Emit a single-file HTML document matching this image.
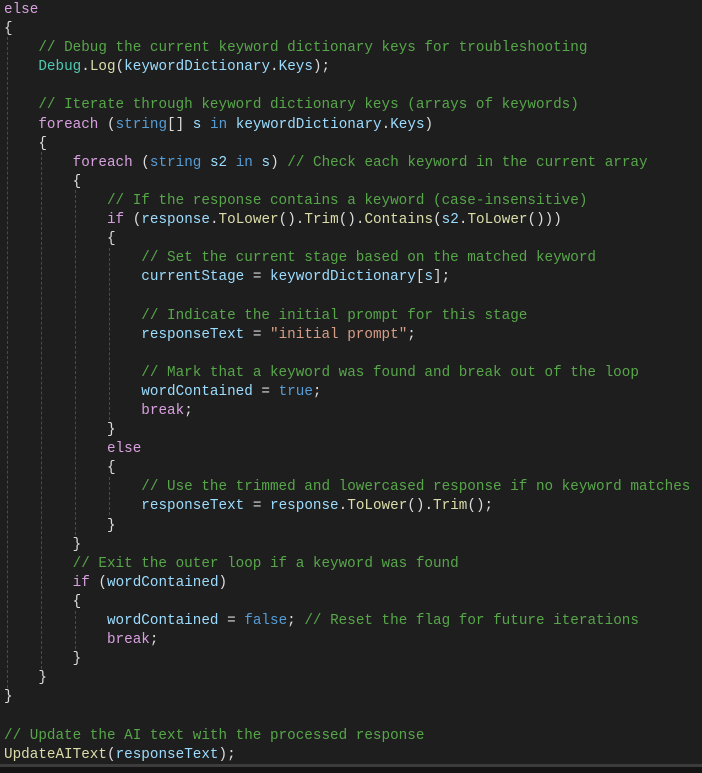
<!DOCTYPE html>
<html><head><meta charset="utf-8"><style>
html,body{margin:0;padding:0;background:#1e1e1e;width:702px;height:773px;overflow:hidden}
#code{position:absolute;left:4px;top:1px;font-family:"Liberation Mono",monospace;font-size:14.3px;line-height:19.1px;color:#dcdcdc;white-space:pre;margin:0}
.k{color:#d8a0df}.b{color:#569cd6}.c{color:#57a64a}.v{color:#9cdcfe}.m{color:#dcdcaa}.t{color:#4ec9b0}.s{color:#d69d85}
.g{position:absolute;width:0;border-left:1px dashed #4a4a4a}
#bar{position:absolute;left:0;top:764px;width:702px;height:3px;background:#3c3c3c}
#bot{position:absolute;left:0;top:767px;width:702px;height:6px;background:#141414}
</style></head><body>
<div class="g" style="left:7px;top:37px;height:651px"></div>
<div class="g" style="left:41px;top:152px;height:517px"></div>
<div class="g" style="left:75px;top:190px;height:345px"></div>
<div class="g" style="left:75px;top:611px;height:38px"></div>
<div class="g" style="left:109px;top:248px;height:172px"></div>
<div class="g" style="left:109px;top:477px;height:38px"></div>
<pre id="code"><span class="k">else</span>
{
    <span class="c">// Debug the current keyword dictionary keys for troubleshooting</span>
    <span class="t">Debug</span>.<span class="m">Log</span>(<span class="v">keywordDictionary</span>.<span class="v">Keys</span>);

    <span class="c">// Iterate through keyword dictionary keys (arrays of keywords)</span>
    <span class="k">foreach</span> (<span class="b">string</span>[] <span class="v">s</span> <span class="b">in</span> <span class="v">keywordDictionary</span>.<span class="v">Keys</span>)
    {
        <span class="k">foreach</span> (<span class="b">string</span> <span class="v">s2</span> <span class="b">in</span> <span class="v">s</span>) <span class="c">// Check each keyword in the current array</span>
        {
            <span class="c">// If the response contains a keyword (case-insensitive)</span>
            <span class="k">if</span> (<span class="v">response</span>.<span class="m">ToLower</span>().<span class="m">Trim</span>().<span class="m">Contains</span>(<span class="v">s2</span>.<span class="m">ToLower</span>()))
            {
                <span class="c">// Set the current stage based on the matched keyword</span>
                <span class="v">currentStage</span> = <span class="v">keywordDictionary</span>[<span class="v">s</span>];

                <span class="c">// Indicate the initial prompt for this stage</span>
                <span class="v">responseText</span> = <span class="s">"initial prompt"</span>;

                <span class="c">// Mark that a keyword was found and break out of the loop</span>
                <span class="v">wordContained</span> = <span class="b">true</span>;
                <span class="k">break</span>;
            }
            <span class="k">else</span>
            {
                <span class="c">// Use the trimmed and lowercased response if no keyword matches</span>
                <span class="v">responseText</span> = <span class="v">response</span>.<span class="m">ToLower</span>().<span class="m">Trim</span>();
            }
        }
        <span class="c">// Exit the outer loop if a keyword was found</span>
        <span class="k">if</span> (<span class="v">wordContained</span>)
        {
            <span class="v">wordContained</span> = <span class="b">false</span>; <span class="c">// Reset the flag for future iterations</span>
            <span class="k">break</span>;
        }
    }
}

<span class="c">// Update the AI text with the processed response</span>
<span class="m">UpdateAIText</span>(<span class="v">responseText</span>);</pre>
<div id="bar"></div><div id="bot"></div>
</body></html>
